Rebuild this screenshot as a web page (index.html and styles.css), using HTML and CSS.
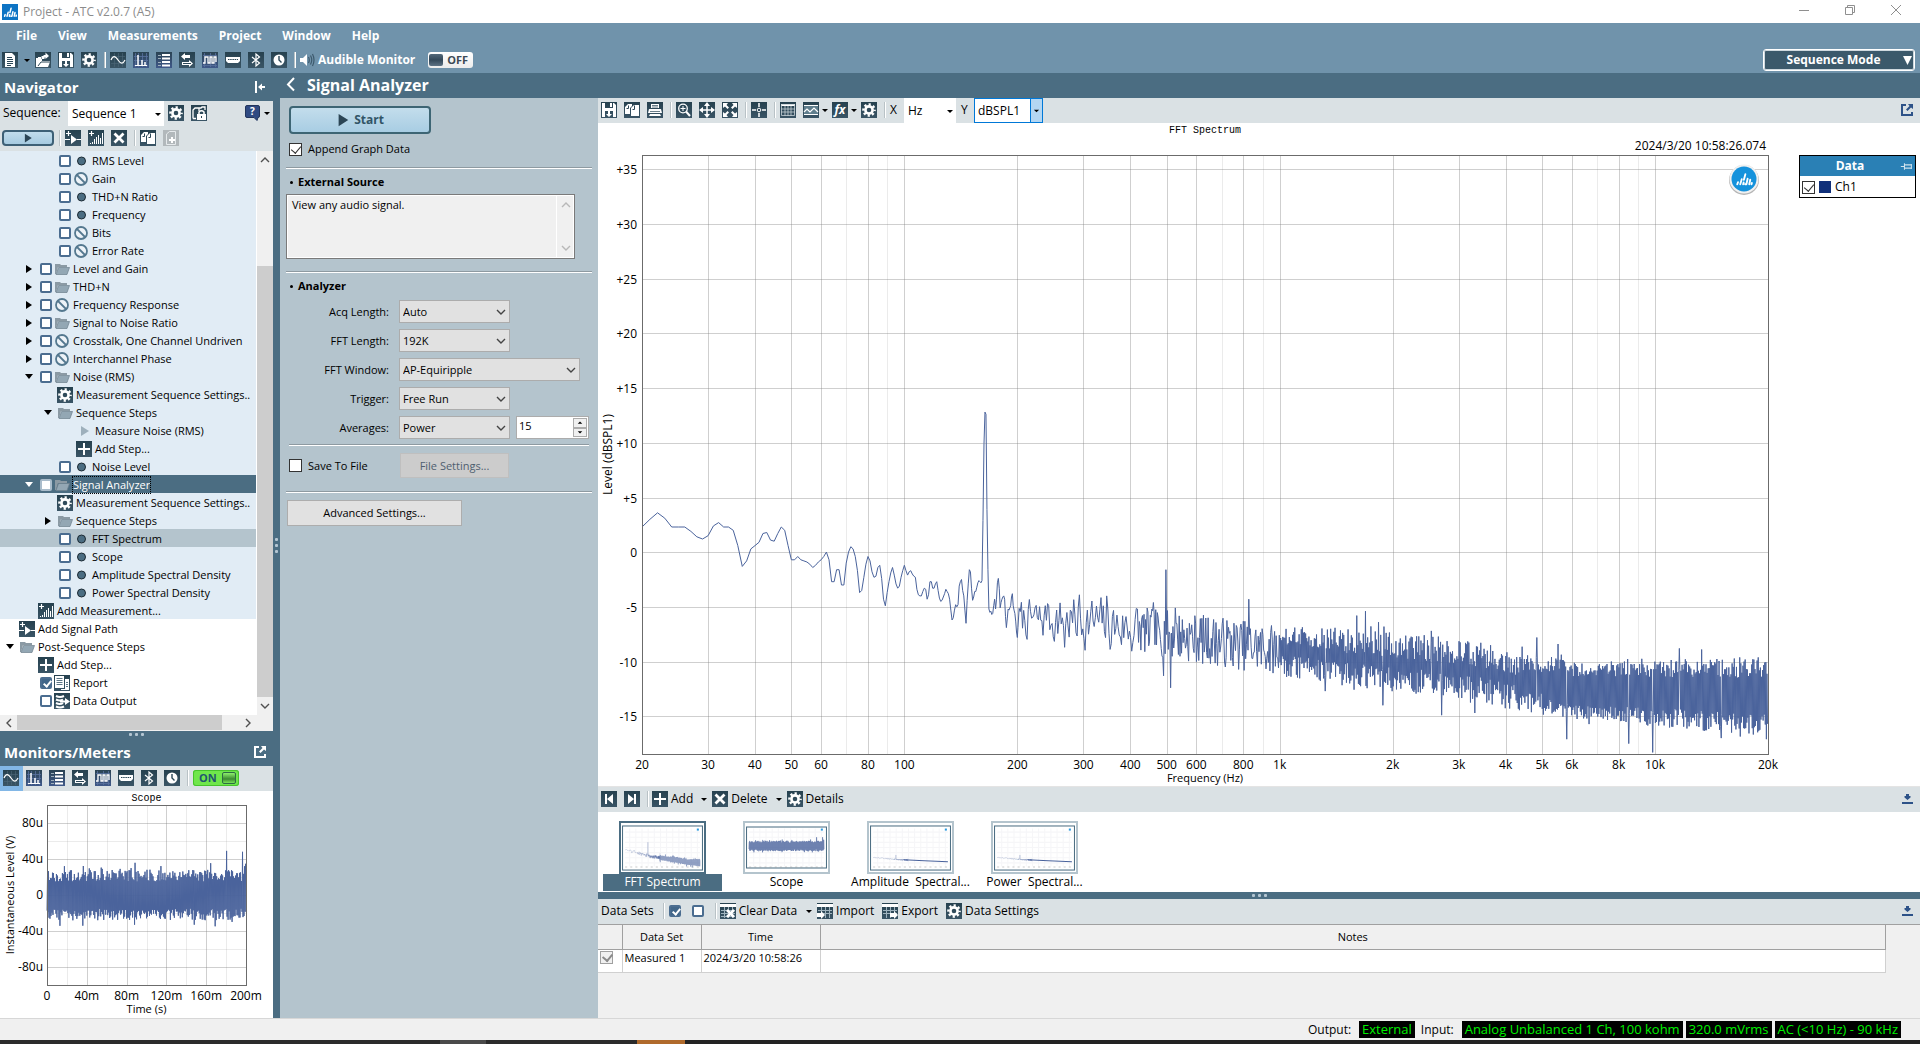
FILE: index.html
```html
<!DOCTYPE html>
<html lang="en">
<head>
<meta charset="utf-8">
<title>Project - ATC v2.0.7 (A5)</title>
<link rel="stylesheet" href="styles.css">
</head>
<body>
<svg class="defs" aria-hidden="true">
  <symbol id="logo" viewBox="0 0 16 16"><g stroke="#fff" stroke-width="1.5" stroke-linecap="round"><path d="M2.6 12.2l.6-1.6M5 12.2l1.2-4M7.3 12.2l.4-1.4M9 12.2l-.1 0M7.9 8.6l1.2-4.4M9.9 12.2l1-4.4M12.2 12.2l.8-3.6M14 12.2l.3-1"/></g></symbol>
  <symbol id="i-doc" viewBox="0 0 16 16"><path fill="#fff" d="M3 1h7l3 3v11H3z"/><path stroke="#2b4757" d="M5 5.500h5M5 7.500h6M5 9.500h6M5 11.500h6M5 13.500h4"/></symbol>
  <symbol id="i-open" viewBox="0 0 16 16"><path fill="#fff" d="M1 15V6h2v-1h3v2h1v2h8v1l-2 5z"/><path d="M3 14l3-4h9" stroke="#2b4757" fill="none"/><path fill="#fff" d="M6.500 7V4h2V3h2V.5L14 4l-3.500 3V5.500h-1V7z"/></symbol>
  <symbol id="i-save" viewBox="0 0 16 16"><path fill="#fff" d="M1 1h3v5h8V1h1l2 2v12h-3V9H4v6H1zM9 1h2v4H9z"/><path fill="#fff" d="M7 9h2v3h2l-3 3-3-3h2z"/></symbol>
  <symbol id="i-gear" viewBox="0 0 16 16"><g fill="none" stroke="#fff"><circle cx="8" cy="8" r="3.600" stroke-width="2.600"/><circle cx="8" cy="8" r="5.600" stroke-width="2.400" stroke-dasharray="2.200 2.200" stroke-dashoffset="1.100"/></g></symbol>
  <symbol id="i-sine" viewBox="0 0 16 16"><path stroke="#4d6878" stroke-width=".6" d="M4.500 1v14M8.500 1v14M12.500 1v14M1 4.500h14M1 11.500h14"/><path fill="none" stroke="#fff" stroke-width="1.200" d="M1 8C3 3.500 5 3.500 8 8s5 4 7 0"/></symbol>
  <symbol id="i-fft" viewBox="0 0 16 16"><path stroke="#5a72a0" stroke-width=".8" d="M2.500 1v14M5.500 1v14M9.500 1v14M13.500 1v14M1 4.500h14M1 8.500h14M1 13.500h14"/><path fill="none" stroke="#fff" d="M2 13.500h3V3v10.500h4V8v5.500h3V10v3.500h2"/></symbol>
  <symbol id="i-list" viewBox="0 0 16 16"><path stroke="#fff" stroke-width="2" d="M6 3h8M6 6.500h8M6 10h8M6 13.500h8"/><path stroke="#9fb0bb" d="M2 3.500h3M2 6.500h3M2 10.500h3M2 13.500h3"/></symbol>
  <symbol id="i-swap" viewBox="0 0 16 16"><path fill="#fff" d="M2 4.500L6 1v2h5v3H6v2zM14 11.500L10 8v2H3v3h7v2z"/><path stroke="#2b4757" d="M4 11.500h8"/></symbol>
  <symbol id="i-digital" viewBox="0 0 16 16"><path stroke="#5a72a0" stroke-width=".8" d="M2.500 1v14M8.500 1v14M13.500 1v14M1 3.500h14M1 13.500h14"/><path fill="none" stroke="#fff" stroke-width="1.300" d="M1 11h2V5h3v6h2V5h2v6h2V5h2v5"/></symbol>
  <symbol id="i-hdmi" viewBox="0 0 16 16"><path fill="#fff" d="M1 5h14v4l-2 2H3L1 9z"/><path stroke="#2b4757" d="M3 7.500h10" stroke-dasharray="1.500 .7"/></symbol>
  <symbol id="i-bt" viewBox="0 0 16 16"><path fill="none" stroke="#fff" stroke-width="1.200" d="M4 5l7.500 6L8 14V2l3.500 3L4 11"/></symbol>
  <symbol id="i-clock" viewBox="0 0 16 16"><circle cx="8" cy="8" r="5.500" fill="#fff"/><path fill="none" stroke="#2b4757" stroke-width="1.400" d="M8 4v4l2.500 2.500"/></symbol>
  <symbol id="i-speaker" viewBox="0 0 16 16"><path fill="#fff" d="M0 6h3l4-4v12l-4-4H0z"/><path fill="none" stroke="#3d5a6d" stroke-width="1.200" d="M8.500 5q1.500 3 0 6M10.500 3.500q2.500 4.500 0 9M12.500 2q3 6 0 12"/></symbol>
  <symbol id="i-pages" viewBox="0 0 16 16"><path fill="#fff" d="M1 5l3-3h4v2L6 6v6H1z"/><path fill="#fff" d="M7 6l3-3h5v11H7z"/><path stroke="#2b4757" fill="none" d="M2.500 6.500h2v-3M8.500 7.500h2v-4"/></symbol>
  <symbol id="i-lockpage" viewBox="0 0 16 16"><path fill="none" stroke="#fff" stroke-width="1.300" d="M2 13.500V5l2-2h4v3M7 3h3l1-1h3v3M2 13.500h3"/><path fill="#fff" d="M6 9h9v6H6z"/><path fill="none" stroke="#fff" stroke-width="1.500" d="M8 9V7q2.500-2.500 5 0v2"/><path stroke="#2b4757" d="M10.500 11v2"/></symbol>
  <symbol id="i-pageplus" viewBox="0 0 16 16"><path fill="none" stroke="#e6eaec" d="M3.500 14.500V4l3-2.500h6v13z"/><path stroke="#fff" stroke-width="2" d="M6 10h6M9 7v6"/></symbol>
  <symbol id="i-path" viewBox="0 0 16 16"><path stroke="#fff" stroke-width="1.200" d="M1 3.500h5M3.500 1v5M0 9.500h5M12 9.500h4"/><path fill="#fff" d="M6 5l6 4.500L6 14z"/></symbol>
  <symbol id="i-meas" viewBox="0 0 16 16"><path stroke="#fff" stroke-width="1.200" d="M1 3.500h5M3.500 1v5"/><path stroke="#fff" d="M2.500 14v-1M4.500 14v-2M6.500 14V9M8.500 14V7M10.500 14V5M12.500 14V8M14.500 14V3"/></symbol>
  <symbol id="i-x" viewBox="0 0 16 16"><path stroke="#fff" stroke-width="2.800" d="M3.500 3.500l9 9M12.500 3.500l-9 9"/></symbol>
  <symbol id="i-print" viewBox="0 0 16 16"><path fill="#fff" d="M4 2h8v4H4zM2 7h12l1 4H1zM3 12h10l1 2H2z"/><path stroke="#2b4757" stroke-width=".7" d="M5 3.500h6M5 5h6M3 9.500h10"/></symbol>
  <symbol id="i-zoom" viewBox="0 0 16 16"><g fill="none" stroke="#fff"><circle cx="7" cy="6.500" r="4.300" stroke-width="1.300"/><path d="M4.500 6.500h5M7 4v5"/><path stroke-width="2" d="M10 9.500l4 4.500"/></g></symbol>
  <symbol id="i-move" viewBox="0 0 16 16"><path stroke="#fff" stroke-width="1.500" d="M8 2v12M2 8h12"/><path fill="#fff" d="M8 0l3 4H5zM8 16l3-4H5zM0 8l4-3v6zM16 8l-4-3v6z"/></symbol>
  <symbol id="i-expand" viewBox="0 0 16 16"><path fill="#fff" d="M1 1h5L4.500 3l2.500 2.500L5.500 7 3 4.500 1 6zM15 1h-5l1.500 2L9 5.500 10.500 7 13 4.500 15 6zM1 15h5l-1.500-2L7 10.500 5.500 9 3 11.500 1 10zM15 15h-5l1.500-2L9 10.500 10.500 9l2.500 2.500 2-1.500z"/></symbol>
  <symbol id="i-cursor" viewBox="0 0 16 16"><g fill="none" stroke="#fff"><path stroke-width="1.500" d="M8 1v4M8 11v4M1 8h4M11 8h4"/><circle cx="8" cy="8" r="1.800"/></g></symbol>
  <symbol id="i-table" viewBox="0 0 16 16"><path fill="#fff" d="M1 2h14v2H1z"/><path fill="none" stroke="#c5d0d6" stroke-width=".8" d="M1.500 2.500h13v11h-13zM5 4v10M8 4v10M11 4v10M1 7h14M1 10h14"/></symbol>
  <symbol id="i-graph" viewBox="0 0 16 16"><path fill="#5f7e8d" d="M1 3h14v10H1z"/><path fill="none" stroke="#fff" stroke-width="1.200" d="M1 3.500h14M1 12.500h14M1 10l3-3 3 3 4-4 4 4"/></symbol>
  <symbol id="i-prev" viewBox="0 0 16 16"><path fill="#fff" d="M4 3h2v10H4zM12 3v10L6 8z"/></symbol>
  <symbol id="i-next" viewBox="0 0 16 16"><path fill="#fff" d="M10 3h2v10h-2zM4 3v10l6-5z"/></symbol>
  <symbol id="i-plus" viewBox="0 0 16 16"><path stroke="#fff" stroke-width="2" d="M2 8h12M8 2v12"/></symbol>
  <symbol id="i-clear" viewBox="0 0 16 16"><path fill="#fff" d="M0 1h16v3H0z"/><path fill="none" stroke="#9fb3be" d="M1 7.500h14M1 10.500h14M1 13.500h14M4.500 4v11M8.500 4v11M12.500 4v11"/><path stroke="#fff" stroke-width="2.500" d="M7 7l7 7M14 7l-7 7"/></symbol>
  <symbol id="i-import" viewBox="0 0 16 16"><path fill="#fff" d="M0 1h16v3H0z"/><path fill="none" stroke="#9fb3be" d="M1 7.500h14M1 10.500h14M4.500 4v11M8.500 4v11M12.500 4v11"/><path fill="#fff" d="M0 10h4V8l4 4-4 4v-2H0z"/></symbol>
  <symbol id="i-export" viewBox="0 0 16 16"><path fill="#fff" d="M0 1h16v3H0z"/><path fill="none" stroke="#9fb3be" d="M1 7.500h14M1 10.500h14M4.500 4v11M8.500 4v11M12.500 4v11"/><path fill="#fff" d="M8 10h4V8l4 4-4 4v-2H8z"/></symbol>
  <symbol id="i-report" viewBox="0 0 16 16"><path fill="#fff" d="M1 1h9v12H1zM11 4h4v11H7v-1h4z"/><path stroke="#5c7585" d="M2.500 3.500h6M2.500 5.500h6M2.500 7.500h6M2.500 9.500h6M12 7.500h2M12 9.500h2M12 11.500h2"/></symbol>
  <symbol id="i-dataout" viewBox="0 0 16 16"><path fill="none" stroke="#fff" stroke-width="2" d="M2 3q4 2 8 0M2 6.500q4 2 7 0M2 10q4 2 7 0M2 13.500q4 2 8 0"/><path fill="#fff" d="M6 7.500h5V5l5 3.500-5 3.500V9.500H6z"/></symbol>
  <symbol id="i-folder" viewBox="0 0 16 16"><path fill="#8b9aa4" d="M1 3h5l1 1h6v2H4L2 13H1z"/><path fill="#93a7b4" stroke="#6d808c" stroke-width=".7" d="M4.500 6.500h11L13 13.500H2z"/></symbol>
  <symbol id="i-no" viewBox="0 0 16 16"><g fill="none" stroke="#54788f" stroke-width="1.800"><circle cx="8" cy="8" r="6" fill="#edf3f8"/><path d="M4 4l8 8"/></g></symbol>
  <symbol id="i-dot" viewBox="0 0 16 16"><circle cx="8.500" cy="8" r="4" fill="#4b6d82" stroke="#1c2a33"/></symbol>
  <symbol id="i-tri" viewBox="0 0 16 16"><path fill="#9eb0bc" d="M5 3l8 5-8 5z"/></symbol>
  <symbol id="i-play" viewBox="0 0 16 16"><path fill="#2b4555" d="M3 1l11 7-11 7z"/></symbol>
  <symbol id="i-popout" viewBox="0 0 16 16"><path fill="none" stroke="currentColor" stroke-width="2" d="M7 3H3v10h10V10"/><path fill="currentColor" d="M9 2h5v5l-2-1.500L8.500 9 7 7.500 10.500 4z"/></symbol>
  <symbol id="i-down" viewBox="0 0 16 16"><path fill="currentColor" d="M3 11h11v2H3zM7 3h3v2h1.500v1.500L8.500 9 5.500 6.500V5H7z"/></symbol>
  <symbol id="i-collapse" viewBox="0 0 16 16"><path fill="#fff" d="M3 2h2v12H3zM6 8l4-3.500V7h3v2h-3v2.500z"/></symbol>
  <symbol id="i-back" viewBox="0 0 16 16"><path fill="none" stroke="#fff" stroke-width="2" d="M11 1L5 7.500l6 6"/></symbol>
  <symbol id="i-caret" viewBox="0 0 8 8"><path fill="#000" d="M1 3h6L4 6z"/></symbol>
  <symbol id="i-chev" viewBox="0 0 10 10"><path fill="none" stroke="currentColor" stroke-width="1.400" d="M1 3l4 4 4-4"/></symbol>
  <symbol id="i-pin" viewBox="0 0 16 16"><path fill="none" stroke="#cfe2ee" stroke-width="1.300" d="M1 8h4M5.500 4v8M6 6h8v4H6M14 5v6"/></symbol>
</svg>

<div class="app">
  <header class="titlebar">
    <svg class="app-logo"><use href="#logo"/></svg>
    <span class="app-title">Project - ATC v2.0.7 (A5)</span>
    <div class="win-buttons">
      <button aria-label="Minimize"><svg viewBox="0 0 12 12"><path d="M1 6.500h10"/></svg></button>
      <button aria-label="Restore"><svg viewBox="0 0 12 12"><path d="M1.500 3.500h7v7h-7zM3.500 3V1.500h7v7H9"/></svg></button>
      <button aria-label="Close"><svg viewBox="0 0 12 12"><path d="M1 1l10 10M11 1L1 11"/></svg></button>
    </div>
  </header>

  <div class="topbar">
    <div class="topbar-left">
      <nav class="menu">
        <button>File</button><button>View</button><button>Measurements</button><button>Project</button><button>Window</button><button>Help</button>
      </nav>
      <div class="tools main-tools">
        <button class="ico" aria-label="New"><svg><use href="#i-doc"/></svg></button>
        <button class="caret caret-wide" aria-label="New options"><svg><use href="#i-caret"/></svg></button>
        <button class="ico" aria-label="Open"><svg><use href="#i-open"/></svg></button>
        <button class="ico" aria-label="Save"><svg><use href="#i-save"/></svg></button>
        <button class="ico" aria-label="Settings"><svg><use href="#i-gear"/></svg></button>
        <i class="sep"></i>
        <button class="ico" aria-label="Scope"><svg><use href="#i-sine"/></svg></button>
        <button class="ico blue" aria-label="FFT"><svg><use href="#i-fft"/></svg></button>
        <button class="ico blue" aria-label="Meters"><svg><use href="#i-list"/></svg></button>
        <button class="ico" aria-label="Input output"><svg><use href="#i-swap"/></svg></button>
        <button class="ico blue" aria-label="Digital"><svg><use href="#i-digital"/></svg></button>
        <button class="ico" aria-label="HDMI"><svg><use href="#i-hdmi"/></svg></button>
        <button class="ico" aria-label="Bluetooth"><svg><use href="#i-bt"/></svg></button>
        <button class="ico" aria-label="Clock"><svg><use href="#i-clock"/></svg></button>
        <i class="sep"></i>
        <svg class="speaker"><use href="#i-speaker"/></svg>
        <span class="audible">Audible Monitor</span>
        <button class="toggle off"><i></i>OFF</button>
      </div>
    </div>
    <button class="mode"><span>Sequence Mode</span><svg viewBox="0 0 10 10"><path fill="#fff" d="M0 0h10L5 10z"/></svg></button>
  </div>

  <div class="body">
    <aside class="left">
      <div class="nav-head"><h2>Navigator</h2><button class="plain" aria-label="Collapse"><svg><use href="#i-collapse"/></svg></button></div>
      <div class="tools">
        <label for="seq" class="seq-label">Sequence:</label>
        <div class="combo flat seq"><select id="seq"><option>Sequence 1</option></select><svg><use href="#i-caret"/></svg></div>
        <button class="ico" aria-label="Sequence settings"><svg><use href="#i-gear"/></svg></button>
        <button class="ico" aria-label="Lock"><svg><use href="#i-lockpage"/></svg></button>
        <button class="plain push" aria-label="Help"><svg viewBox="0 0 16 16"><path fill="#2f4a82" stroke="#22355c" d="M2 .5h11q1.500 0 1.500 1.500v9q0 1.500-1.500 1.500l-1 3-3-3H2Q.5 12.500.5 11V2Q.5.5 2 .5z"/><text x="7.500" y="10" class="qm">?</text></svg></button>
        <button class="caret last" aria-label="Help options"><svg><use href="#i-caret"/></svg></button>
      </div>
      <div class="tools">
        <button class="run" aria-label="Run sequence"><svg><use href="#i-play"/></svg></button>
        <i class="sep"></i>
        <button class="ico" aria-label="Add signal path"><svg><use href="#i-path"/></svg></button>
        <button class="ico" aria-label="Add measurement"><svg><use href="#i-meas"/></svg></button>
        <button class="ico" aria-label="Delete"><svg><use href="#i-x"/></svg></button>
        <i class="sep"></i>
        <button class="ico" aria-label="Copy"><svg><use href="#i-pages"/></svg></button>
        <button class="ico off" disabled aria-label="Paste"><svg><use href="#i-pageplus"/></svg></button>
      </div>

      <div class="tree-wrap">
        <ul class="tree">
          <li class="lv2 shade"><label><input type="checkbox"><svg><use href="#i-dot"/></svg>RMS Level</label></li>
          <li class="lv2 shade"><label><input type="checkbox"><svg><use href="#i-no"/></svg>Gain</label></li>
          <li class="lv2 shade"><label><input type="checkbox"><svg><use href="#i-dot"/></svg>THD+N Ratio</label></li>
          <li class="lv2 shade"><label><input type="checkbox"><svg><use href="#i-dot"/></svg>Frequency</label></li>
          <li class="lv2 shade"><label><input type="checkbox"><svg><use href="#i-no"/></svg>Bits</label></li>
          <li class="lv2 shade"><label><input type="checkbox"><svg><use href="#i-no"/></svg>Error Rate</label></li>
          <li class="lv1 shade"><button class="tw" aria-label="Expand"></button><label><input type="checkbox"><svg><use href="#i-folder"/></svg>Level and Gain</label></li>
          <li class="lv1 shade"><button class="tw" aria-label="Expand"></button><label><input type="checkbox"><svg><use href="#i-folder"/></svg>THD+N</label></li>
          <li class="lv1 shade"><button class="tw" aria-label="Expand"></button><label><input type="checkbox"><svg><use href="#i-no"/></svg>Frequency Response</label></li>
          <li class="lv1 shade"><button class="tw" aria-label="Expand"></button><label><input type="checkbox"><svg><use href="#i-folder"/></svg>Signal to Noise Ratio</label></li>
          <li class="lv1 shade"><button class="tw" aria-label="Expand"></button><label><input type="checkbox"><svg><use href="#i-no"/></svg>Crosstalk, One Channel Undriven</label></li>
          <li class="lv1 shade"><button class="tw" aria-label="Expand"></button><label><input type="checkbox"><svg><use href="#i-no"/></svg>Interchannel Phase</label></li>
          <li class="lv1 shade"><button class="tw open" aria-label="Collapse"></button><label><input type="checkbox"><svg><use href="#i-folder"/></svg>Noise (RMS)</label></li>
          <li class="lv2 shade"><button class="item"><svg class="dark"><use href="#i-gear"/></svg>Measurement Sequence Settings..</button></li>
          <li class="lv2 shade"><button class="tw open" aria-label="Collapse"></button><span class="item"><svg><use href="#i-folder"/></svg>Sequence Steps</span></li>
          <li class="lv3 shade"><span class="item"><svg><use href="#i-tri"/></svg>Measure Noise (RMS)</span></li>
          <li class="lv3 shade"><button class="item"><svg class="dark"><use href="#i-plus"/></svg>Add Step...</button></li>
          <li class="lv2 shade"><label><input type="checkbox"><svg><use href="#i-dot"/></svg>Noise Level</label></li>
          <li class="lv1 selected"><button class="tw open" aria-label="Collapse"></button><label><input type="checkbox"><svg><use href="#i-folder"/></svg><span class="focus">Signal Analyzer</span></label></li>
          <li class="lv2 shade"><button class="item"><svg class="dark"><use href="#i-gear"/></svg>Measurement Sequence Settings..</button></li>
          <li class="lv2 shade"><button class="tw" aria-label="Expand"></button><span class="item"><svg><use href="#i-folder"/></svg>Sequence Steps</span></li>
          <li class="lv2 current"><label><input type="checkbox"><svg><use href="#i-dot"/></svg>FFT Spectrum</label></li>
          <li class="lv2 shade"><label><input type="checkbox"><svg><use href="#i-dot"/></svg>Scope</label></li>
          <li class="lv2 shade"><label><input type="checkbox"><svg><use href="#i-dot"/></svg>Amplitude Spectral Density</label></li>
          <li class="lv2 shade"><label><input type="checkbox"><svg><use href="#i-dot"/></svg>Power Spectral Density</label></li>
          <li class="lv1 shade"><button class="item"><svg class="dark"><use href="#i-meas"/></svg>Add Measurement...</button></li>
          <li class="lv0"><button class="item"><svg class="dark"><use href="#i-path"/></svg>Add Signal Path</button></li>
          <li class="lv0"><button class="tw open" aria-label="Collapse"></button><span class="item"><svg><use href="#i-folder"/></svg>Post-Sequence Steps</span></li>
          <li class="lv1"><button class="item"><svg class="dark"><use href="#i-plus"/></svg>Add Step...</button></li>
          <li class="lv1"><label><input type="checkbox" checked><svg class="dark"><use href="#i-report"/></svg>Report</label></li>
          <li class="lv1"><label><input type="checkbox"><svg class="dark"><use href="#i-dataout"/></svg>Data Output</label></li>
        </ul>
        <div class="vbar">
          <button aria-label="Scroll up"><svg class="up"><use href="#i-chev"/></svg></button>
          <i class="vgap"></i><i class="vthumb"></i>
          <button aria-label="Scroll down"><svg><use href="#i-chev"/></svg></button>
        </div>
      </div>
      <div class="hbar">
        <button aria-label="Scroll left"><svg class="lt"><use href="#i-chev"/></svg></button>
        <i class="hthumb"></i><i class="hgap"></i>
        <button aria-label="Scroll right"><svg class="rt"><use href="#i-chev"/></svg></button>
        <i class="corner"></i>
      </div>
      <div class="grip"><i></i><i></i><i></i></div>
      <div class="nav-head"><h2>Monitors/Meters</h2><button class="plain" aria-label="Pop out"><svg><use href="#i-popout"/></svg></button></div>
      <div class="tools meters">
        <span class="active"><button class="ico" aria-label="Scope"><svg><use href="#i-sine"/></svg></button></span>
        <button class="ico blue" aria-label="FFT"><svg><use href="#i-fft"/></svg></button>
        <button class="ico blue" aria-label="Meters"><svg><use href="#i-list"/></svg></button>
        <button class="ico" aria-label="Input output"><svg><use href="#i-swap"/></svg></button>
        <button class="ico blue" aria-label="Digital"><svg><use href="#i-digital"/></svg></button>
        <button class="ico" aria-label="HDMI"><svg><use href="#i-hdmi"/></svg></button>
        <button class="ico" aria-label="Bluetooth"><svg><use href="#i-bt"/></svg></button>
        <button class="ico" aria-label="Clock"><svg><use href="#i-clock"/></svg></button>
        <i class="sep"></i>
        <button class="toggle on">ON<i></i></button>
      </div>
      <svg class="scope" id="scope"></svg>
    </aside>
    <div class="vgrip"><i></i><i></i><i></i></div>

    <main class="right">
      <div class="page-head"><button class="plain" aria-label="Back"><svg><use href="#i-back"/></svg></button><h2>Signal Analyzer</h2></div>
      <div class="page">
        <form class="settings">
          <button type="button" class="start"><svg><use href="#i-play"/></svg>Start</button>
          <label class="tick"><input type="checkbox" checked>Append Graph Data</label>
          <hr>
          <h3>External Source</h3>
          <div class="desc">
            <textarea aria-label="Description" readonly>View any audio signal.</textarea>
            <div class="desc-bar"><svg class="up"><use href="#i-chev"/></svg><svg><use href="#i-chev"/></svg></div>
          </div>
          <hr>
          <h3>Analyzer</h3>
          <div class="fields">
            <label for="acq">Acq Length:</label>
            <div class="combo box"><select id="acq"><option>Auto</option></select><svg><use href="#i-chev"/></svg></div>
            <label for="len">FFT Length:</label>
            <div class="combo box"><select id="len"><option>192K</option></select><svg><use href="#i-chev"/></svg></div>
            <label for="win">FFT Window:</label>
            <div class="combo box wide"><select id="win"><option>AP-Equiripple</option></select><svg><use href="#i-chev"/></svg></div>
            <label for="trg">Trigger:</label>
            <div class="combo box"><select id="trg"><option>Free Run</option></select><svg><use href="#i-chev"/></svg></div>
            <label for="avg">Averages:</label>
            <div class="pair">
              <div class="combo box"><select id="avg"><option>Power</option></select><svg><use href="#i-chev"/></svg></div>
              <div class="spin"><input type="text" value="15" aria-label="Average count"><div><button type="button" aria-label="Up"><svg class="up"><use href="#i-caret"/></svg></button><button type="button" aria-label="Down"><svg><use href="#i-caret"/></svg></button></div></div>
            </div>
          </div>
          <hr class="short">
          <div class="file-row">
            <label class="tick"><input type="checkbox">Save To File</label>
            <button type="button" class="btn file" disabled>File Settings...</button>
          </div>
          <hr>
          <button type="button" class="btn adv">Advanced Settings...</button>
        </form>

        <section class="work">
          <div class="tools">
            <button class="ico" aria-label="Save"><svg><use href="#i-save"/></svg></button>
            <button class="ico" aria-label="Copy"><svg><use href="#i-pages"/></svg></button>
            <button class="ico" aria-label="Print"><svg><use href="#i-print"/></svg></button>
            <i class="sep"></i>
            <button class="ico" aria-label="Zoom"><svg><use href="#i-zoom"/></svg></button>
            <button class="ico" aria-label="Pan"><svg><use href="#i-move"/></svg></button>
            <button class="ico" aria-label="Fit"><svg><use href="#i-expand"/></svg></button>
            <i class="sep"></i>
            <button class="ico" aria-label="Cursor"><svg><use href="#i-cursor"/></svg></button>
            <i class="sep"></i>
            <button class="ico" aria-label="Table"><svg><use href="#i-table"/></svg></button>
            <button class="ico" aria-label="Image"><svg><use href="#i-graph"/></svg></button>
            <button class="caret" aria-label="Image options"><svg><use href="#i-caret"/></svg></button>
            <button class="ico" aria-label="Function"><svg viewBox="0 0 16 16"><text x="8" y="12" class="fx">fx</text></svg></button>
            <button class="caret" aria-label="Function options"><svg><use href="#i-caret"/></svg></button>
            <button class="ico" aria-label="Graph settings"><svg><use href="#i-gear"/></svg></button>
            <i class="sep"></i>
            <label for="xu" class="axis">X</label>
            <div class="combo flat xunit"><select id="xu"><option>Hz</option></select><svg><use href="#i-caret"/></svg></div>
            <label for="yu" class="axis">Y</label>
            <div class="combo flat yunit"><select id="yu"><option>dBSPL1</option></select><svg><use href="#i-caret"/></svg></div>
            <button class="plain push navy" aria-label="Pop out"><svg><use href="#i-popout"/></svg></button>
          </div>
          <div class="graph">
            <svg class="fft" id="fft"></svg>
            <div class="legend">
              <div class="legend-head"><span>Data</span><svg><use href="#i-pin"/></svg></div>
              <label class="tick"><input type="checkbox" checked><i class="swatch"></i>Ch1</label>
            </div>
          </div>
          <div class="tools big">
            <button class="ico" aria-label="Previous"><svg><use href="#i-prev"/></svg></button>
            <button class="ico" aria-label="Next"><svg><use href="#i-next"/></svg></button>
            <i class="sep"></i>
            <button class="txt"><svg class="dark"><use href="#i-plus"/></svg>Add</button>
            <button class="caret" aria-label="Add options"><svg><use href="#i-caret"/></svg></button>
            <button class="txt"><svg class="dark"><use href="#i-x"/></svg>Delete</button>
            <button class="caret" aria-label="Delete options"><svg><use href="#i-caret"/></svg></button>
            <button class="txt"><svg class="dark"><use href="#i-gear"/></svg>Details</button>
            <button class="plain push navy" aria-label="Dock"><svg><use href="#i-down"/></svg></button>
          </div>
          <div class="thumbs">
            <button class="thumb sel"><svg data-kind="fft" viewBox="0 0 81 47"></svg><span>FFT Spectrum</span></button>
            <button class="thumb"><svg data-kind="scope" viewBox="0 0 81 47"></svg><span>Scope</span></button>
            <button class="thumb"><svg data-kind="asd" viewBox="0 0 81 47"></svg><span>Amplitude &nbsp;Spectral...</span></button>
            <button class="thumb"><svg data-kind="asd" viewBox="0 0 81 47"></svg><span>Power &nbsp;Spectral...</span></button>
          </div>
          <div class="grip"><i></i><i></i><i></i></div>
          <div class="tools big sets">
            <span class="sets-title">Data Sets</span>
            <i class="sep"></i>
            <input type="checkbox" class="sq" checked aria-label="Select all">
            <input type="checkbox" class="sq" aria-label="Select none">
            <i class="sep"></i>
            <button class="txt"><svg class="dark"><use href="#i-clear"/></svg>Clear Data</button>
            <button class="caret" aria-label="Clear options"><svg><use href="#i-caret"/></svg></button>
            <button class="txt"><svg class="dark"><use href="#i-import"/></svg>Import</button>
            <button class="txt"><svg class="dark"><use href="#i-export"/></svg>Export</button>
            <button class="txt"><svg class="dark"><use href="#i-gear"/></svg>Data Settings</button>
            <button class="plain push navy" aria-label="Dock"><svg><use href="#i-down"/></svg></button>
          </div>
          <div class="data">
            <table>
              <thead><tr><th class="c-tick"></th><th class="c-set">Data Set</th><th class="c-time">Time</th><th>Notes</th></tr></thead>
              <tbody><tr><td><input type="checkbox" class="dim" checked disabled aria-label="Measured 1"></td><td>Measured 1</td><td>2024/3/20 10:58:26</td><td></td></tr></tbody>
            </table>
          </div>
        </section>
      </div>
    </main>
  </div>

  <footer class="status">
    <span>Output:</span><b>External</b><span>Input:</span><b>Analog Unbalanced 1 Ch, 100 kohm</b><b>320.0 mVrms</b><b>AC (&lt;10 Hz) - 90 kHz</b>
  </footer>
  <div class="taskbar"></div>
</div>
<script src="charts.js"></script>
</body>
</html>
```
FILE: styles.css
```css
* { box-sizing: border-box; }
body, h2, h3, ul, hr { margin: 0; padding: 0; }
body { font: 12px/16px "Open Sans", "Noto Sans", sans-serif; color: #000; background: #f0f0f0; }
button { font: inherit; color: inherit; border: 0; padding: 0; background: none; white-space: nowrap; }
input, select, textarea { font: inherit; color: inherit; margin: 0; border-radius: 0; }
svg { display: block; flex: none; }
.defs { position: absolute; width: 0; height: 0; }

.app { display: flex; flex-direction: column; height: 100vh; }

/* title bar */
.titlebar { display: flex; align-items: center; gap: 5px; height: 23px; padding: 0 18px 0 2px; background: #fff; }
.app-logo { width: 16px; height: 16px; background: #0d74c4; }
.app-title { color: #8c8c8c; }
.win-buttons { display: flex; gap: 34px; margin-left: auto; align-self: flex-start; padding-top: 4px; }
.win-buttons svg { width: 12px; height: 12px; fill: none; stroke: #8f8f8f; }

/* menu and main tools */
.topbar { display: flex; align-items: flex-end; justify-content: space-between; height: 50px; padding-right: 5px; background: #7093ab; }
.topbar-left { display: flex; flex-direction: column; }
.menu { display: flex; gap: 21px; height: 25px; padding: 1px 0 0 16px; color: #fff; font-weight: 700; }
.tools { display: flex; align-items: center; gap: 7px; height: 25px; flex: none; padding: 0 0 1px 3px; background: #dae1e4; }
.main-tools { padding-left: 2px; background: none; }
.ico { width: 16px; height: 16px; flex: none; background: linear-gradient(#26414f, #3a5566); }
.ico.blue { background: linear-gradient(#2a4353, #40598a); }
.ico.off { background: #b2b8bb; }
.ico svg, .plain svg, .speaker, .txt svg { width: 16px; height: 16px; }
.dark { background: linear-gradient(#26414f, #3a5566); }
.plain { width: 16px; height: 16px; flex: none; color: #fff; }
.navy { color: #2d5288; }
.push { margin-left: auto; }
.caret { width: 8px; margin: 0 -4px 0 -5px; }
.caret svg { width: 8px; height: 8px; }
.caret-wide { margin: 0 -3px 0 -2px; }
.caret.last { margin-right: 2px; }
.sep { width: 2px; height: 16px; margin-right: -3px; border-left: 1px solid #b9c2c6; border-right: 1px solid #fff; flex: none; }
.audible { color: #fff; font-weight: 700; margin-left: -5px; }
.toggle { display: flex; align-items: center; gap: 4px; height: 16px; padding: 1px 5px 1px 1px; border-radius: 3px; font-size: 11px; font-weight: 700; line-height: 14px; color: #3c4a55; }
.toggle.off { margin-left: 6px; background: linear-gradient(#fff, #ececec); }
.toggle i { width: 14px; height: 12px; border-radius: 2px; background: linear-gradient(#54697a, #34495a 50%, #5d7284); }
.toggle.on { padding: 1px 3px 1px 6px; gap: 5px; background: #6fe64b; box-shadow: inset 0 0 0 1px #46c32c; color: #215570; }
.toggle.on i { background: linear-gradient(#8df06c, #3b8a31 60%, #79e458); border: 1px solid #2d6b45; }
.mode { display: flex; align-items: center; width: 152px; height: 22px; margin-bottom: 2px; padding-right: 2px; border: 1px solid #fff; border-radius: 3px; background: #3b596b; color: #fff; font-weight: 700; box-shadow: inset 0 0 0 1px #cfd9df; }
.mode span { flex: 1; }
.mode svg { width: 9px; height: 9px; }
.qm { font-size: 10px; font-weight: 700; text-anchor: middle; fill: #fff; }
.fx { font-size: 12px; font-style: italic; font-weight: 700; text-anchor: middle; fill: #fff; }

.body { display: flex; flex: 1; min-height: 0; }

/* navigator */
.left { display: flex; flex-direction: column; width: 273px; flex: none; }
.nav-head { display: flex; align-items: center; justify-content: space-between; height: 28px; flex: none; padding: 0 5px 0 4px; background: #4b6d82; }
h2 { font-size: 15px; line-height: 20px; color: #fff; }
.seq-label { width: 58px; }
.combo { display: grid; align-items: center; }
.combo > * { grid-area: 1 / 1; }
.combo select { appearance: none; width: 100%; height: 100%; padding: 0 4px; border: 0; background: transparent; outline: 0; }
.combo svg { width: 8px; height: 8px; justify-self: end; pointer-events: none; }
.flat { height: 25px; margin-bottom: -1px; background: #fff; }
.seq { width: 96px; margin-right: -3px; }
.seq svg, .xunit svg { margin-right: 2px; }
.run { display: grid; place-items: center; width: 52px; height: 16px; margin: 0 -2px 0 -1px; border: 2px solid #3d6076; border-radius: 4px; background: linear-gradient(#c1dcec, #a6cae0); }
.run svg { width: 10px; height: 10px; }
.tree-wrap { display: flex; flex: 1; min-height: 0; background: #fff; font-size: 11px; }
.tree { flex: 1; min-width: 0; overflow: hidden; list-style: none; margin-right: 1px; }
.tree li { display: flex; height: 18px; padding-top: 1px; align-items: center; white-space: nowrap; }
.tree label, .item { display: flex; align-items: center; gap: 3px; flex: none; }
.tree label { gap: 0; }
.tree label svg { margin-right: 3px; }
.tree li svg { width: 16px; height: 16px; }
.lv0 { padding-left: 19px; } .lv1 { padding-left: 38px; } .lv2 { padding-left: 57px; } .lv3 { padding-left: 76px; }
.shade { background: #e1ecf5; }
.current { background: #b4c4cd; }
.selected { background: #4b6d82; color: #fff; }
.focus { outline: 1px dotted #000; }
.tw { width: 19px; height: 16px; margin-left: -19px; display: grid; place-items: center; flex: none; }
.tw::before { content: ""; border: 4px solid transparent; border-left: 6px solid #000; border-right: 0; }
.tw.open::before { border: 4px solid transparent; border-top: 5px solid #000; border-bottom: 0; }
.selected .tw.open::before { border-top-color: #fff; }
.tree input, .sq { appearance: none; width: 12px; height: 12px; margin: 0 2px; border: 2px solid #4b6d90; border-radius: 2px; background: #fff; flex: none; }
.tree input:checked, .sq:checked { background: #416689; }
.tree input:checked::before, .sq:checked::before { content: ""; display: block; width: 3px; height: 6px; margin: 0 0 0 3px; border: solid #fff; border-width: 0 2px 2px 0; transform: rotate(40deg); }
.selected input { border-color: #a9bccb; }
.vbar { display: flex; flex-direction: column; width: 16px; background: #f0f0f0; color: #505050; }
.vbar button { height: 18px; display: grid; place-items: center; }
.vbar svg, .hbar svg, .desc-bar svg { width: 10px; height: 10px; }
.up { transform: rotate(180deg); } .lt { transform: rotate(90deg); } .rt { transform: rotate(-90deg); }
.vgap { flex: 97; } .vthumb { flex: 432; background: #cdcdcd; }
.hbar { display: flex; height: 16px; flex: none; background: #f0f0f0; color: #505050; }
.hbar button { width: 17px; display: grid; place-items: center; }
.hthumb { flex: 205; background: #cdcdcd; margin-bottom: 1px; } .hgap { flex: 17; }
.corner { width: 17px; }
.grip, .vgrip { display: flex; gap: 3px; align-items: center; justify-content: center; height: 7px; flex: none; background: #4b6d82; }
.grip i, .vgrip i { width: 3px; height: 3px; border-radius: 1px; background: #b4c6d2; }
.vgrip { flex-direction: column; width: 7px; height: auto; }
.meters { padding-left: 0; }
.active { display: flex; align-items: center; width: 23px; height: 25px; margin: 0 -4px -1px 0; padding: 0 0 1px 3px; background: #82b7e6; }
.scope { width: 100%; height: 227px; background: #fff; }

/* analyzer settings */
.right { display: flex; flex-direction: column; flex: 1; min-width: 0; }
.page-head { display: flex; align-items: center; gap: 8px; height: 25px; flex: none; padding: 0 0 1px 3px; background: #4b6d82; }
.page-head h2 { font-size: 16px; }
.page { display: flex; flex: 1; min-height: 0; }
.settings { width: 318px; flex: none; padding: 8px 6px; background: #b4c4cd; font-size: 11px; }
.start { display: flex; align-items: center; justify-content: center; gap: 4px; width: 142px; height: 28px; margin-left: 3px; border: 2px solid #3d6574; border-radius: 4px; background: linear-gradient(#c3ddec, #a8cde3); color: #315567; font-size: 12px; font-weight: 700; }
.start svg { width: 14px; height: 14px; }
.tick { display: flex; align-items: center; gap: 6px; white-space: nowrap; }
.settings > .tick { margin: 7px 3px 10px; }
.tick input { appearance: none; width: 13px; height: 13px; border: 1px solid #333; background: #fff; flex: none; }
.tick input:checked::before, .dim::before { content: ""; display: block; width: 5px; height: 8px; margin: 0 0 0 3px; border: solid #333; border-width: 0 1px 1px 0; transform: rotate(40deg); }
hr { height: 2px; border: 0; border-top: 1px solid #8e9aa1; background: #fff; }
.short { margin: 5px 3px 0; }
h3 { display: flex; align-items: center; gap: 5px; height: 25px; padding: 1px 0 0 4px; font-size: 11px; }
h3::before { content: ""; width: 3px; height: 3px; border-radius: 2px; background: #000; }
.desc { display: flex; width: 289px; height: 65px; margin-bottom: 12px; border: 1px solid #7a7a7a; background: #f0f0f0; box-shadow: inset 0 0 0 1px #fff; }
textarea { flex: 1; padding: 2px 5px; border: 0; background: none; resize: none; overflow: hidden; outline: 0; }
.desc-bar { display: flex; flex-direction: column; justify-content: space-between; align-items: center; width: 18px; padding: 5px 0; border-left: 1px solid #fff; color: #b8b8b8; }
.fields { display: grid; grid-template-columns: 103px 1fr; gap: 6px 10px; align-items: center; padding-top: 2px; }
.fields > label { text-align: right; }
.box { width: 111px; height: 23px; border: 1px solid #acacac; background: #e1e1e1; color: #000; }
.box.wide { width: 181px; }
.box select { padding: 0 3px; }
.box svg { width: 10px; height: 10px; margin-right: 3px; color: #444; }
.pair { display: flex; gap: 6px; }
.spin { display: flex; width: 73px; height: 23px; padding: 1px; border: 1px solid #acacac; background: #fff; }
.spin input { flex: 1; min-width: 0; padding: 0 1px 3px; border: 0; background: none; }
.spin div { display: flex; flex-direction: column; width: 14px; }
.spin button { flex: 1; display: grid; place-items: center; border: 1px solid #acacac; background: #f0f0f0; }
.spin svg { width: 6px; height: 6px; }
.file-row { display: flex; align-items: center; gap: 31px; padding: 7px 3px 13px; }
.btn { border: 1px solid #adadad; background: #e1e1e1; }
.btn.file { width: 109px; height: 25px; border-color: #bfbfbf; background: #ccc; color: #4f5f70; }
.file-row .tick { width: 80px; }
.btn.adv { width: 175px; height: 26px; margin: 7px 1px; }

/* graph work area */
.work { display: flex; flex-direction: column; flex: 1; min-width: 0; background: #f0f0f0; }
.work .navy { margin-right: 5px; }
.axis { width: 8px; margin-right: -1px; }
.xunit { width: 52px; margin-right: -2px; }
.yunit { width: 69px; margin-left: -1px; border: 1px solid #0078d7; }
.yunit select { padding: 0 3px; }
.yunit svg { width: 12px; height: 23px; padding: 0 2px; border-left: 1px solid #0078d7; background: #b3d6f2; }
.graph { display: flex; flex: 1; min-height: 0; background: #fff; border-bottom: 1px solid #e4e4e4; padding-right: 4px; }
.fft { flex: 1; min-width: 0; width: 0; height: 100%; }
.legend { width: 117px; height: 43px; margin-top: 32px; border: 1px solid #000; background: #fff; }
.legend-head { display: flex; align-items: center; height: 20px; padding-right: 2px; background: #2a80b5; color: #fff; font-weight: 700; }
.legend-head span { flex: 1; text-align: center; }
.legend-head svg { width: 13px; height: 13px; }
.legend .tick { gap: 4px; padding: 3px 2px; }
.swatch { width: 12px; height: 12px; background: #10307a; }
.txt { display: flex; align-items: center; gap: 3px; }
.big .sep + .txt { margin-left: -1px; }
.big .caret { margin: 0 -3px 0 0; }
.thumbs { display: flex; gap: 5px; height: 80px; flex: none; padding: 8px 5px 0; background: #fff; }
.thumb { width: 119px; }
.thumb svg { width: 87px; height: 53px; margin: 0 auto; border: 2px solid #b4c4cd; }
.thumb.sel svg { border-color: #4b6d82; }
.thumb span { display: block; height: 17px; }
.thumb.sel span { background: #4b6d82; color: #fff; }
.sets-title { margin-right: 2px; }
.sets .txt { margin-right: 1px; }
.sq { margin: 0 4px 0 0; }
.data { height: 94px; flex: none; border-top: 1px solid #a0a0a0; padding-right: 34px; font-size: 11px; }
table { width: 100%; border-collapse: collapse; table-layout: fixed; }
th { height: 24px; padding: 0; font-weight: 400; border-right: 1px solid #a0a0a0; border-bottom: 1px solid #a0a0a0; background: #f0f0f0; }
td { height: 23px; padding: 0 2px 6px; border-right: 1px solid #d0d0d0; border-bottom: 1px solid #d0d0d0; background: #fff; white-space: nowrap; }
.c-tick { width: 24px; } .c-set { width: 79px; } .c-time { width: 119px; }
.dim { display: block; appearance: none; width: 13px; height: 13px; border: 1px solid #a0a0a0; background: #f0f0f0; }
.dim::before { border-color: #8a8a8a; border-width: 0 2px 2px 0; width: 5px; height: 7px; }

/* status */
.status { display: flex; align-items: center; justify-content: flex-end; gap: 3px; height: 22px; flex: none; padding-right: 19px; border-top: 1px solid #d7d7d7; background: #f0f0f0; white-space: nowrap; }
.status span { margin: 0 5px 0 3px; }
.status b { height: 17px; padding: 0 3px; background: #000; color: #00f000; font-size: 13px; font-weight: 400; }
.taskbar { height: 4px; flex: none; background: linear-gradient(90deg, #2b2b2b 440px, #4a4a4a 440px 486px, #2b2b2b 486px 637px, #b06a2c 637px 685px, #232323 685px); }

/* charts */
.tl { fill: #000; font-size: 12px; }
.ttl { fill: #000; font: 10px "Liberation Mono", monospace; }
.axt { fill: #000; font-size: 11px; }
.gmaj { stroke: #808080; stroke-opacity: .38; }
.gmin { stroke: #808080; stroke-opacity: .16; }
.frame { fill: none; stroke: #6b6b6b; }
.trace { fill: none; stroke: #4a639c; stroke-width: 1; stroke-linejoin: round; }
.faint { stroke-width: .5; stroke-opacity: .4; }
```
FILE: charts.js
```js
const NS = 'http://www.w3.org/2000/svg';

function add(parent, tag, attrs, text) {
  const el = document.createElementNS(NS, tag);
  for (const k in attrs) el.setAttribute(k, attrs[k]);
  if (text !== undefined) el.textContent = text;
  parent.appendChild(el);
  return el;
}

function rng(seed) {
  return () => {
    seed = (seed * 1664525 + 1013904223) >>> 0;
    return seed / 4294967296;
  };
}

// Level in dB for each 1 Hz bin, starting at 20 Hz
const LOW_BINS = [
  2.4, 3.1, 3.7, 3.2, 2.4, 2.4, 2.4, 2, 1.5, 1.3, 1.6, 2.5, 2.8, 2.4, 2.4, 2.1, 0.7, -1.2, -0.7, 0.4,
  0.7, 1, 1.8, 1.9, 1.2, 1.1, 1.8, 2.4, 2.1, 0.7, -0.6, -0.6, -0.3, -0.6, -0.7, -0.8, -1, -1.3, -1.1, -0.8,
  -0.6, -0.3, 0.1, -0.6, -2.6, -2.6, -1.5, -1.5, -2.9, -2.9, -0.9, 0.1, 0.6, 0.4, -0.3, -1.6, -3.6, -3.4, -2.2, -1,
  -0.3, -0.7, -1.7, -2.2, -2.1, -1.3, -1.1, -2.3, -4.2, -4.8, -3.6, -2.6, -1.8, -1.3, -2, -2.8, -3.2, -3, -2.2, -1.6,
  -1.1, -1.6, -2, -1.7, -1.6, -1.9, -2.1, -2.2, -3.3, -3.8, -3.9, -3.9, -3.5, -3.2, -3.3, -4.2, -3.8, -2.6, -2.6, -3.2,
  -3.2, -2.8, -2.6, -3.4, -4.1, -4.4, -4.3, -4, -3.7, -3.3, -3.5, -3.7, -4.2, -5.2, -6.1, -5.9, -5.2, -4.7, -4.9, -4.7,
  -3, -2.6, -2.4, -3.4, -3.9, -5.2, -6.4, -4.3, -2.8, -1.5, -1.7, -3.2, -4.3, -4, -3.5, -3.5, -3.1, -2.7, -2.5, -2.6,
  -2.7, -2.5, 3, 10, 12.9, 12.7, 4, -1.5, -5.1, -5.4, -5.3, -5.6, -5.5, -4.8, -4.2, -5.1, -4.2, -2.7, -2.3, -3.2,
  -5, -4.5, -4.2, -4, -3.9, -4.2, -5.8, -6.8, -6, -5.1, -5.2, -5, -4.8, -4, -3.7, -4.8, -5.2, -5.5, -6.2, -7.2, -7.7,
];

// Frequency, upper and lower noise envelope in dB
const ENVELOPE = [
  [200, -4.6, -7.4], [300, -4.2, -8.2], [400, -4.8, -9], [500, -5.2, -9.6], [700, -5.8, -10.4], [1000, -6.6, -11.2],
  [1400, -6.8, -12], [2000, -7.2, -12.8], [3000, -7.8, -13.2], [4000, -8.6, -14.2], [6000, -9.8, -15.2],
  [10000, -9.6, -15.8], [20000, -9.4, -16.8],
];
const SPIKES = [[240, -4.6], [266, -8.6], [291, -3.8], [345, -3.9], [460, -4.5], [490, -11.2], [496, -1.5], [512, -12.3], [526, -5],
  [824, -4.2], [1320, -12.6], [1600, -5.7], [1690, -5.3], [1830, -6.3], [1880, -13.9], [2530, -7.1], [2700, -14.8], [3300, -14.6],
  [4830, -7.7], [5500, -8.3], [5800, -17], [8500, -17.4], [9850, -18.2], [11600, -8.7], [13300, -8.8], [15000, -16.9], [19800, -17]];

function envelope(f) {
  let i = 1;
  while (i < ENVELOPE.length - 1 && ENVELOPE[i][0] < f) i++;
  const [f0, h0, l0] = ENVELOPE[i - 1], [f1, h1, l1] = ENVELOPE[i];
  const t = Math.log(f / f0) / Math.log(f1 / f0);
  return [h0 + (h1 - h0) * t, l0 + (l1 - l0) * t];
}

function spectrum() {
  const rand = rng(7), pts = LOW_BINS.map((v, i) => [20 + i, v]);
  let f = 200.8, up = true, prev = -6;
  while (f < 20000) {
    const [hi, lo] = envelope(f), mid = (hi + lo) / 2, half = (hi - lo) / 2;
    let v;
    if (f < 420) {
      prev = mid + (prev - mid) * 0.35 + (rand() * 2 - 1) * half * 1.05;
      v = prev;
    } else if (f < 1000) {
      v = mid + (rand() * 2 - 1) * half;
    } else {
      const floor = f < 5000 ? 0.15 : 0.45;
      v = mid + (up ? 1 : -1) * half * (floor + rand() * (1 - floor) + (rand() > 0.96 ? 0.2 : 0));
    }
    up = !up;
    pts.push([f, v]);
    f *= Math.pow(10, 1 / (f < 420 ? 330 : f < 1000 ? 480 : 690));
  }
  for (const [sf, sv] of SPIKES) {
    const i = pts.findIndex(p => p[0] >= sf);
    if (i > 0) pts[i][1] = sv;
  }
  return pts;
}

function scopeTrace() {
  const rand = rng(21), pts = [];
  for (let i = 0; i <= 400; i++) {
    const big = rand() > 0.93 ? 8 : 0;
    const v = (i % 2 ? 1 : -1) * (15 + rand() * 13 + big);
    pts.push([i / 2, v]);
  }
  pts[361][1] = 49;
  pts[393][1] = 48;
  return pts;
}

const path = (pts, fx, fy) => 'M' + pts.map(p => fx(p[0]).toFixed(2) + ' ' + fy(p[1]).toFixed(1)).join('L');
const SPEC = spectrum(), SCOPE = scopeTrace();
const snap = v => Math.round(v) + 0.5;

function drawFft() {
  const svg = document.getElementById('fft');
  const w = svg.clientWidth, h = svg.clientHeight;
  svg.replaceChildren();
  const L = 44, R = w - 31, T = 32, B = h - 32;
  const X = f => L + (R - L) * Math.log10(f / 20) / 3;
  const Y = d => T + (36.4 - d) / 54.75 * (B - T);
  for (let dec = 10; dec <= 10000; dec *= 10) {
    for (let m = 1; m < 10; m++) {
      const f = m * dec;
      if (f <= 20 || f >= 20000) continue;
      const x = snap(X(f));
      add(svg, 'path', { class: m === 7 || m === 9 ? 'gmin' : 'gmaj', d: `M${x} ${T}V${B}` });
    }
  }
  for (let d = -15; d <= 35; d += 5) {
    const y = snap(Y(d) - 1);
    add(svg, 'path', { class: 'gmaj', d: `M${L} ${y}H${R}` });
    add(svg, 'text', { class: 'tl', x: L - 5, y: y + 4, 'text-anchor': 'end' }, d > 0 ? '+' + d : d);
  }
  for (const f of [20, 30, 40, 50, 60, 80, 100, 200, 300, 400, 500, 600, 800, 1000, 2000, 3000, 4000, 5000, 6000, 8000, 10000, 20000]) {
    add(svg, 'text', { class: 'tl', x: X(f), y: B + 15, 'text-anchor': 'middle' }, f >= 1000 ? f / 1000 + 'k' : f);
  }
  add(svg, 'path', { class: 'trace', d: path(SPEC, X, Y) });
  add(svg, 'rect', { class: 'frame', x: L + .5, y: T + .5, width: R - L, height: B - T });
  add(svg, 'text', { class: 'ttl', x: (L + R) / 2, y: 10, 'text-anchor': 'middle' }, 'FFT Spectrum');
  add(svg, 'text', { class: 'tl', x: R - 2, y: 27, 'text-anchor': 'end' }, '2024/3/20 10:58:26.074');
  add(svg, 'text', { class: 'axt', x: (L + R) / 2, y: B + 28, 'text-anchor': 'middle' }, 'Frequency (Hz)');
  const my = (T + B) / 2;
  add(svg, 'text', { class: 'tl', x: 14, y: my, 'text-anchor': 'middle', transform: `rotate(-90 14 ${my})` }, 'Level (dBSPL1)');
  add(svg, 'circle', { cx: R - 24, cy: T + 25, r: 15, fill: '#b5b5b5' });
  add(svg, 'circle', { cx: R - 24, cy: T + 24, r: 14.5, fill: '#f1f1f1' });
  add(svg, 'circle', { cx: R - 24, cy: T + 24, r: 12.5, fill: '#1592dc' });
  add(svg, 'use', { href: '#logo', x: R - 34, y: T + 14, width: 20, height: 20 });
}

function drawScope() {
  const svg = document.getElementById('scope');
  const w = svg.clientWidth, h = svg.clientHeight;
  svg.replaceChildren();
  const L = 47, R = w - 27, T = 14, B = h - 33;
  const X = t => L + (R - L) * t / 200;
  const Y = u => T + (100 - u) / 200 * (B - T);
  for (let t = 20; t < 200; t += 20) add(svg, 'path', { class: t % 40 ? 'gmin' : 'gmaj', d: `M${snap(X(t))} ${T}V${B}` });
  for (let u = -80; u <= 80; u += 20) {
    add(svg, 'path', { class: u % 40 ? 'gmin' : 'gmaj', d: `M${L} ${snap(Y(u))}H${R}` });
    if (u % 40 === 0) add(svg, 'text', { class: 'tl', x: L - 4, y: Y(u) + 4, 'text-anchor': 'end' }, u ? u + 'u' : '0');
  }
  add(svg, 'path', { class: 'trace', d: path(SCOPE, X, Y) });
  add(svg, 'rect', { class: 'frame', x: L + .5, y: T + .5, width: R - L, height: B - T });
  for (let t = 0; t <= 200; t += 40) add(svg, 'text', { class: 'tl', x: X(t), y: B + 15, 'text-anchor': 'middle' }, t ? t + 'm' : '0');
  add(svg, 'text', { class: 'ttl', x: (L + R) / 2, y: 10, 'text-anchor': 'middle' }, 'Scope');
  add(svg, 'text', { class: 'axt', x: (L + R) / 2, y: B + 28, 'text-anchor': 'middle' }, 'Time (s)');
  const my = (T + B) / 2;
  add(svg, 'text', { class: 'axt', x: 14, y: my, 'text-anchor': 'middle', transform: `rotate(-90 14 ${my})` }, 'Instantaneous Level (V)');
}

function drawThumbs() {
  for (const svg of document.querySelectorAll('.thumb svg')) {
    const kind = svg.dataset.kind;
    const t = kind === 'scope' ? 3.5 : 2.5, b = kind === 'scope' ? 43.5 : 45.5;
    add(svg, 'rect', { x: 1.5, y: t, width: 78, height: b - t, fill: '#fff', stroke: '#4b6d82' });
    for (let x = 8; x < 76; x += 6) add(svg, 'path', { d: `M${x}.5 5V42`, stroke: '#f6f6f8' });
    for (let y = 8; y < 42; y += 5) add(svg, 'path', { d: `M4 ${y}.5H77`, stroke: '#f6f6f8' });
    add(svg, 'path', { d: 'M4 42.5H77', stroke: '#9a9a9a', 'stroke-opacity': .5, 'stroke-dasharray': '2 3' });
    add(svg, 'rect', { x: 74, y: 5, width: 2, height: 2, fill: '#2c9be0' });
    const X = f => 4 + 73 * Math.log10(f / 20) / 3;
    if (kind === 'scope') {
      add(svg, 'path', { class: 'trace', 'stroke-opacity': .8, d: path(SCOPE, v => 4 + v * 73 / 200, v => 22 - v * .17) });
    } else {
      const Y = kind === 'fft' ? d => 28 - d * .75 : d => 34 - d * .25;
      add(svg, 'path', { class: 'trace faint', d: path(SPEC.filter(p => p[0] < 500), X, Y) });
      if (kind === 'fft') add(svg, 'path', { class: 'trace', 'stroke-opacity': .6, d: path(SPEC.filter(p => p[0] >= 500), X, d => 27 - d * .85) });
      else add(svg, 'path', { class: 'trace', d: 'M34 35.500L54 36.500L77 37.500' });
    }
  }
}

function draw() {
  drawFft();
  drawScope();
}
drawThumbs();
draw();
window.addEventListener('resize', draw);
```
